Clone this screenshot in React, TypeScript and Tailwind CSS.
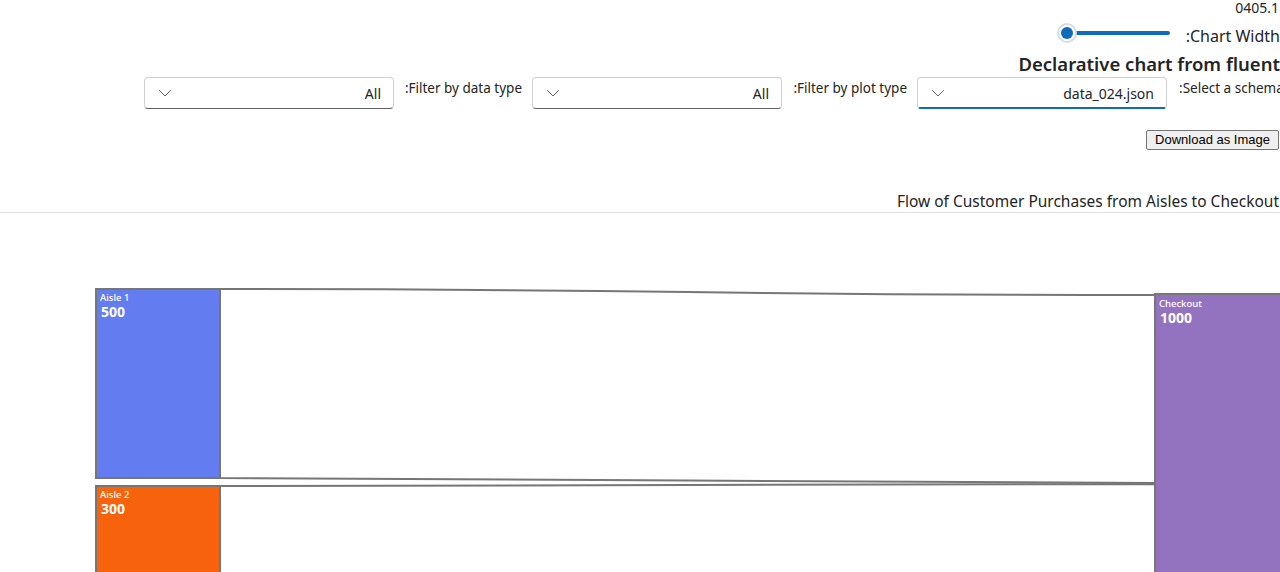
import React from 'react';

const FONT = { fontFamily: '"Segoe UI", "Noto Sans", sans-serif' };

function Chevron() {
  return (
    <svg width="16" height="16" viewBox="0 0 16 16" fill="none">
      <path d="M2.5 5.5 L8 11 L13.5 5.5" stroke="#616161" strokeWidth="1" strokeLinecap="round" strokeLinejoin="round" />
    </svg>
  );
}

function Dropdown({ value, focused }: { value: string; focused?: boolean }) {
  return (
    <div
      className={
        'relative flex h-[32px] w-[250px] shrink-0 items-center justify-between rounded-[4px] border border-[#d1d1d1] bg-white pl-[12px] pr-[12px] ' +
        (focused ? 'border-b-[#0f6cbd]' : 'border-b-[#616161]')
      }
    >
      <span className="text-[14px] text-[#242424]">{value}</span>
      <Chevron />
      {focused && <div className="absolute -bottom-[1px] left-[1px] right-[1px] h-[2px] rounded-b-[4px] bg-[#0f6cbd]" />}
    </div>
  );
}

function Slider() {
  return (
    <div className="relative h-[26px] w-[114px]">
      <div className="absolute left-[10px] right-[1px] top-[11px] h-[4px] rounded-full bg-[#0f6cbd]" />
      <div className="absolute left-0 top-[3px] flex h-[20px] w-[20px] items-center justify-center rounded-full border-[2px] border-[#d6dde6] bg-white">
        <div className="h-[12px] w-[12px] rounded-full bg-[#0f6cbd]" />
      </div>
    </div>
  );
}

function Sankey() {
  const link = (x0: number, y0a: number, y0b: number, x1: number, y1a: number, y1b: number) => {
    const mx = (x0 + x1) / 2;
    return `M${x0},${y0a} C${mx},${y0a} ${mx},${y1a} ${x1},${y1a} L${x1},${y1b} C${mx},${y1b} ${mx},${y0b} ${x0},${y0b} Z`;
  };
  return (
    <svg width="1280" height="359" className="block">
      <path d={link(220, 76, 265, 1155, 82, 270)} fill="#ffffff" stroke="#767676" strokeWidth="2" />
      <path d={link(220, 273, 387, 1155, 271, 385)} fill="#ffffff" stroke="#767676" strokeWidth="2" />
      <rect x="96" y="76" width="124" height="189" fill="#637cef" stroke="#767676" strokeWidth="2" />
      <rect x="96" y="273" width="124" height="114" fill="#f7630c" stroke="#767676" strokeWidth="2" />
      <rect x="1155" y="81" width="126" height="380" fill="#9373c0" stroke="#767676" strokeWidth="2" />
      <g fill="#ffffff" style={FONT}>
        <text x="100" y="88" fontSize="9.5" fontWeight="500">Aisle 1</text>
        <text x="101" y="104" fontSize="14" fontWeight="700">500</text>
        <text x="100" y="285" fontSize="9.5" fontWeight="500">Aisle 2</text>
        <text x="101" y="301" fontSize="14" fontWeight="700">300</text>
        <text x="1159" y="94" fontSize="9.5" fontWeight="500">Checkout</text>
        <text x="1160" y="110" fontSize="14" fontWeight="700">1000</text>
      </g>
    </svg>
  );
}

export default function App() {
  return (
    <div dir="rtl" className="h-[572px] w-[1280px] overflow-hidden bg-white text-[#242424]" style={FONT}>
      <div className="h-[14px] pr-[1px] pt-[1px] text-[14px] leading-[14px]">0405.1</div>

      {/* Chart width */}
      <div className="mt-[6px] flex h-[26px] items-start">
        <div className="mt-[6px] text-[16px] leading-[20px]">Chart Width:</div>
        <div className="mr-[15px]">
          <Slider />
        </div>
      </div>

      <div className="mt-[6px] text-[18.5px] font-semibold leading-[24px]">Declarative chart from fluent</div>

      {/* Filters */}
      <div className="mt-[1px] flex h-[32px] items-start">
        <div className="flex w-[101px] shrink-0 justify-end overflow-hidden whitespace-nowrap pt-[1px] text-[13.5px] leading-[20px]">
          <span className="shrink-0">Select a schema:</span>
        </div>
        <div className="mr-[12px]">
          <Dropdown value="data_024.json" focused />
        </div>
        <div className="mr-[10px] w-[112px] shrink-0 whitespace-nowrap pt-[1px] text-[13.5px] leading-[20px]">Filter by plot type:</div>
        <div className="mr-[13px]">
          <Dropdown value="All" />
        </div>
        <div className="mr-[10px] w-[116px] shrink-0 whitespace-nowrap pt-[1px] text-[13.5px] leading-[20px]">Filter by data type:</div>
        <div className="mr-[12px]">
          <Dropdown value="All" />
        </div>
      </div>

      <div className="mt-[21px] flex">
        <button
          className="mr-[1px] h-[20px] w-[133px] rounded-[2px] border border-[#767676] bg-[#efefef] text-[13px] leading-[18px] text-black"
          style={{ fontFamily: '"Liberation Sans", Arial, sans-serif' }}
        >
          Download as Image
        </button>
      </div>

      <div className="mt-[41px] pr-[1px] text-[15.5px] leading-[20px] text-[#242424]">Flow of Customer Purchases from Aisles to Checkout</div>
      <div className="mt-[1px] h-[1px] w-full bg-[#e1e1e1]" />

      <div dir="ltr">
        <Sankey />
      </div>
    </div>
  );
}
